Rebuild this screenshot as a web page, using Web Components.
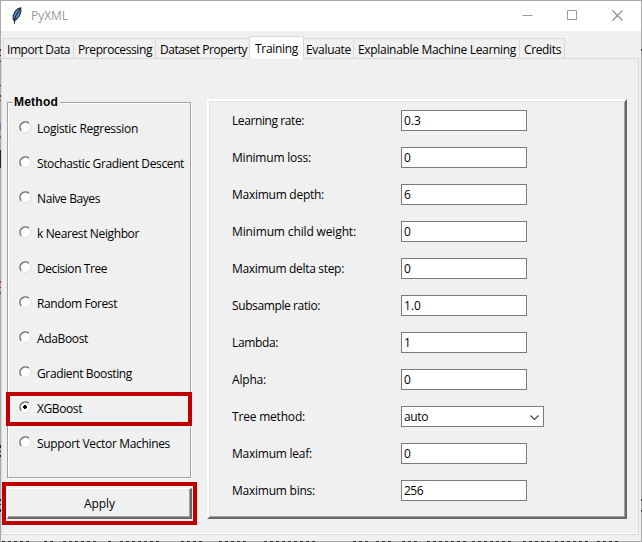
<!DOCTYPE html>
<html lang="en"><head><meta charset="utf-8"><title>PyXML</title>
<style>
html,body{margin:0;width:642px;height:542px;overflow:hidden;background:#f0f0f0;font:12px/16px "Open Sans","Noto Sans",sans-serif;color:#000}
</style></head><body>
<px-window></px-window>
<script>
const def=(name,html,after)=>customElements.define(name,class extends HTMLElement{
  connectedCallback(){
    if(this.shadowRoot)return;
    this.attachShadow({mode:'open'}).innerHTML=typeof html==='function'?html(this):html;
    if(after)after(this);
  }
});
/* A label that spreads or tightens its letters to a given width */
const meter=document.createElement('canvas').getContext('2d');
def('px-text',e=>`<style>:host{display:inline-block;white-space:nowrap;flex:none;text-align:left}</style><slot></slot>`,e=>{
  const w=+e.getAttribute('w'),t=e.textContent,cs=getComputedStyle(e);
  e.style.width=w+'px';
  meter.font=`${cs.fontWeight} ${cs.fontSize} ${cs.fontFamily}`;
  e.style.letterSpacing=((w-meter.measureText(t).width)/t.length).toFixed(3)+'px';
});
def('px-titlebar',`<style>
:host{display:flex;box-sizing:border-box;height:30px;background:#fff;color:#999;align-items:center;padding:0 1px 1px 10px}
.name{flex:1;padding:1px 0 0 6px}
.b{width:45px;display:flex;justify-content:center}svg{display:block}
</style>
<svg width="14" height="18" viewBox="0 0 14 18"><path d="M2.2 12.6 2.2 8.6 4.4 4.2 7.4 1.6 9.8 1 9.8 5 8.2 9 5.6 12 3.8 13.6Z" fill="#5f9bdc" stroke="#16202c" stroke-width="1.1"/><path d="M9 2.4 5.2 8 3.6 12.6 3.4 16.6" fill="none" stroke="#16202c" stroke-width="1.1"/></svg>
<span class="name"><px-text w="37">PyXML</px-text></span>
<span class="b"><svg width="11" height="11"><path d="M.5 5.5h10" stroke="#999"/></svg></span>
<span class="b"><svg width="11" height="11"><path d="M.5.5h9v9h-9z" fill="none" stroke="#999"/></svg></span>
<span class="b"><svg width="11" height="11"><path d="M.5.5l10 10M10.5.5l-10 10" stroke="#8c8c8c" stroke-width="1.1"/></svg></span>`);
def('px-tab',`<style>
:host{display:block;box-sizing:border-box;height:20px;width:var(--w);border:1px solid #d9d9d9;border-left-width:var(--bl,1px);border-bottom:0;padding:3px 0 0 var(--pl,3px)}
:host([on]){height:23px;background:#fff;padding-top:4px;margin-bottom:-1px;position:relative}
</style><slot></slot>`);
def('px-tabs',`<style>:host{display:flex;align-items:flex-end;height:22px;margin-left:2px;position:relative;z-index:1}</style>
<px-tab style="--w:71px"><px-text w="63">Import Data</px-text></px-tab>
<px-tab style="--w:82px;--bl:0px;--pl:4px"><px-text w="74">Preprocessing</px-text></px-tab>
<px-tab style="--w:93px;--bl:0px;--pl:4px;border-right:0"><px-text w="87">Dataset Property</px-text></px-tab>
<px-tab on style="--w:55px;--pl:5px"><px-text w="43">Training</px-text></px-tab>
<px-tab style="--w:50px;--bl:0px;--pl:2px"><px-text w="45">Evaluate</px-text></px-tab>
<px-tab style="--w:166px;--bl:0px;--pl:4px"><px-text w="158">Explainable Machine Learning</px-text></px-tab>
<px-tab style="--w:45px;--bl:0px;--pl:4px"><px-text w="37">Credits</px-text></px-tab>`);
def('px-radio',e=>`<style>
:host{display:flex;align-items:center;height:35px;padding-left:11px;gap:5px;position:relative}
svg{display:block;margin-top:-2px}
:host([on])::after{content:"";position:absolute;left:-2px;top:1px;width:178px;height:26px;border:4px solid #c00000}
</style><svg width="13" height="13"><circle cx="6" cy="6" r="5" fill="#fff"/><path d="M2.2 9.8A5.4 5.4 0 0 1 9.8 2.2" fill="none" stroke="#707070" stroke-width="1.5"/><path d="M10.2 2.5A5.4 5.4 0 0 1 2.5 10.2" fill="none" stroke="#e3e3e3"/>${e.hasAttribute('on')?'<path d="M5 4h2v1h1v2h-1v1h-2v-1h-1v-2h1z"/>':''}</svg><px-text w="${e.getAttribute('w')}">${e.getAttribute('label')}</px-text>`);
const methods=[['Logistic Regression',101],['Stochastic Gradient Descent',147],['Naive Bayes',63],['k Nearest Neighbor',102],['Decision Tree',70],['Random Forest',80],['AdaBoost',51],['Gradient Boosting',95],['XGBoost',45],['Support Vector Machines',133]];
def('px-methods',`<style>
:host{display:block;box-sizing:border-box;width:184px;height:376px;border:1px solid #a0a0a0;box-shadow:1px 1px #fff,inset 1px 1px #fff;padding-top:8px}
.legend{font:bold 12px/16px "Liberation Sans",Arial,sans-serif;height:16px;width:46px;padding-left:1px;background:#f0f0f0;margin:-17px 0 1px 5px}
</style><div class="legend"><px-text w="44">Method</px-text></div>
${methods.map(([t,w])=>`<px-radio ${t==='XGBoost'?'on':''} w="${w}" label="${t}"></px-radio>`).join('')}`);
def('px-apply',`<style>
:host{display:block;width:187px;height:35px;border:4px solid #c00000;margin:4px 0 0 -5px}
div{box-sizing:border-box;margin:2px 0 0 1px;width:185px;height:31px;border:1px solid #fff;border-right:2px solid #696969;border-bottom:2px solid #696969;box-shadow:inset -1px -1px #a0a0a0;padding:7px 0 0 76px}
</style><div><px-text w="31">Apply</px-text></div>`);
def('px-field',e=>`<style>
:host{display:flex;height:21px}
.l{width:169px;padding-top:3px}
.f{box-sizing:border-box;height:21px;width:126px;border:1px solid #7a7a7a;background:#fff;padding:2px 4px 0 2px;display:flex;justify-content:space-between}
.s{width:143px}svg{margin-top:5px}
</style><span class="l"><px-text w="${e.getAttribute('w')}">${e.getAttribute('label')}</px-text></span>
<span class="f ${e.hasAttribute('select')?'s':''}"><px-text w="${e.getAttribute('vw')}">${e.getAttribute('value')}</px-text>${e.hasAttribute('select')?'<svg width="9" height="8"><path d="M.5 1.5l4 4 4-4" fill="none" stroke="#444" stroke-width="1.1"/></svg>':''}</span>`);
const params=[['Learning rate:',72,'0.3',17],['Minimum loss:',79,'0',7],['Maximum depth:',92,'6',7],['Minimum child weight:',124,'0',7],['Maximum delta step:',112,'0',7],['Subsample ratio:',88,'1.0',17],['Lambda:',46,'1',7],['Alpha:',34,'0',7],['Tree method:',73,'auto',24],['Maximum leaf:',80,'0',7],['Maximum bins:',83,'256',19]];
def('px-params',`<style>
:host{display:flex;flex-direction:column;gap:16px;box-sizing:border-box;width:420px;height:420px;border:2px solid #fff;border-right-color:#696969;border-bottom-color:#696969;box-shadow:inset 1px 1px #e3e3e3,inset -1px -1px #a0a0a0;padding:9px 0 0 23px}
</style>${params.map(([t,w,v,vw])=>`<px-field label="${t}" w="${w}" value="${v}" vw="${vw}" ${t==='Tree method:'?'select':''}></px-field>`).join('')}`);
/* Marks of the page behind the window that show along its edges: [x, y, w, h, colour] */
const marks=[[0,49,1,2,'#333'],[0,55,1,1,'#333'],[0,61,1,1,'#333'],[0,85,1,1,'#333'],[0,95,1,2,'#444'],[0,100,1,1,'#c22'],[0,123,1,7,'#5b87b5'],[0,136,1,2,'#2f75b5'],[0,150,1,18,'#222'],[0,281,1,2,'#b33'],[0,287,1,1,'#b33'],[0,292,1,2,'#b33'],[0,445,1,3,'#222'],[0,451,1,1,'#222'],[0,455,1,2,'#222'],[0,499,1,2,'#222'],[0,504,1,1,'#333'],[0,509,1,3,'#222'],[641,49,1,2,'#333'],[641,499,1,2,'#333'],[641,510,1,2,'#333']];
for(const [a,b] of [[2,28],[44,52],[63,96],[108,114],[120,158],[181,200],[219,245],[264,318],[353,366],[376,394],[402,420],[427,464],[472,514],[523,548],[555,590],[597,620]])
  for(let x=a;x<b;x+=6)marks.push([x,541,3,1,'#2b2b2b']);
def('px-window',`<style>
:host{display:block;box-sizing:border-box;width:642px;height:542px;border:1px solid #aaa;position:relative}
.edge{position:absolute;left:-1px;top:-1px}
px-tabs{margin-top:5px}
main{box-sizing:border-box;display:flex;gap:16px;width:638px;height:477px;border:1px solid #d9d9d9;box-shadow:inset 0 -1px #fff;padding:40px 0 0 5px}
.left{padding-top:3px;width:184px}
</style><px-titlebar></px-titlebar><px-tabs></px-tabs>
<main><div class="left"><px-methods></px-methods><px-apply></px-apply></div><px-params></px-params></main>
<svg class="edge" width="642" height="542">${marks.map(([x,y,w,h,c])=>`<rect x="${x}" y="${y}" width="${w}" height="${h}" fill="${c}"/>`).join('')}</svg>`);
</script></body></html>
